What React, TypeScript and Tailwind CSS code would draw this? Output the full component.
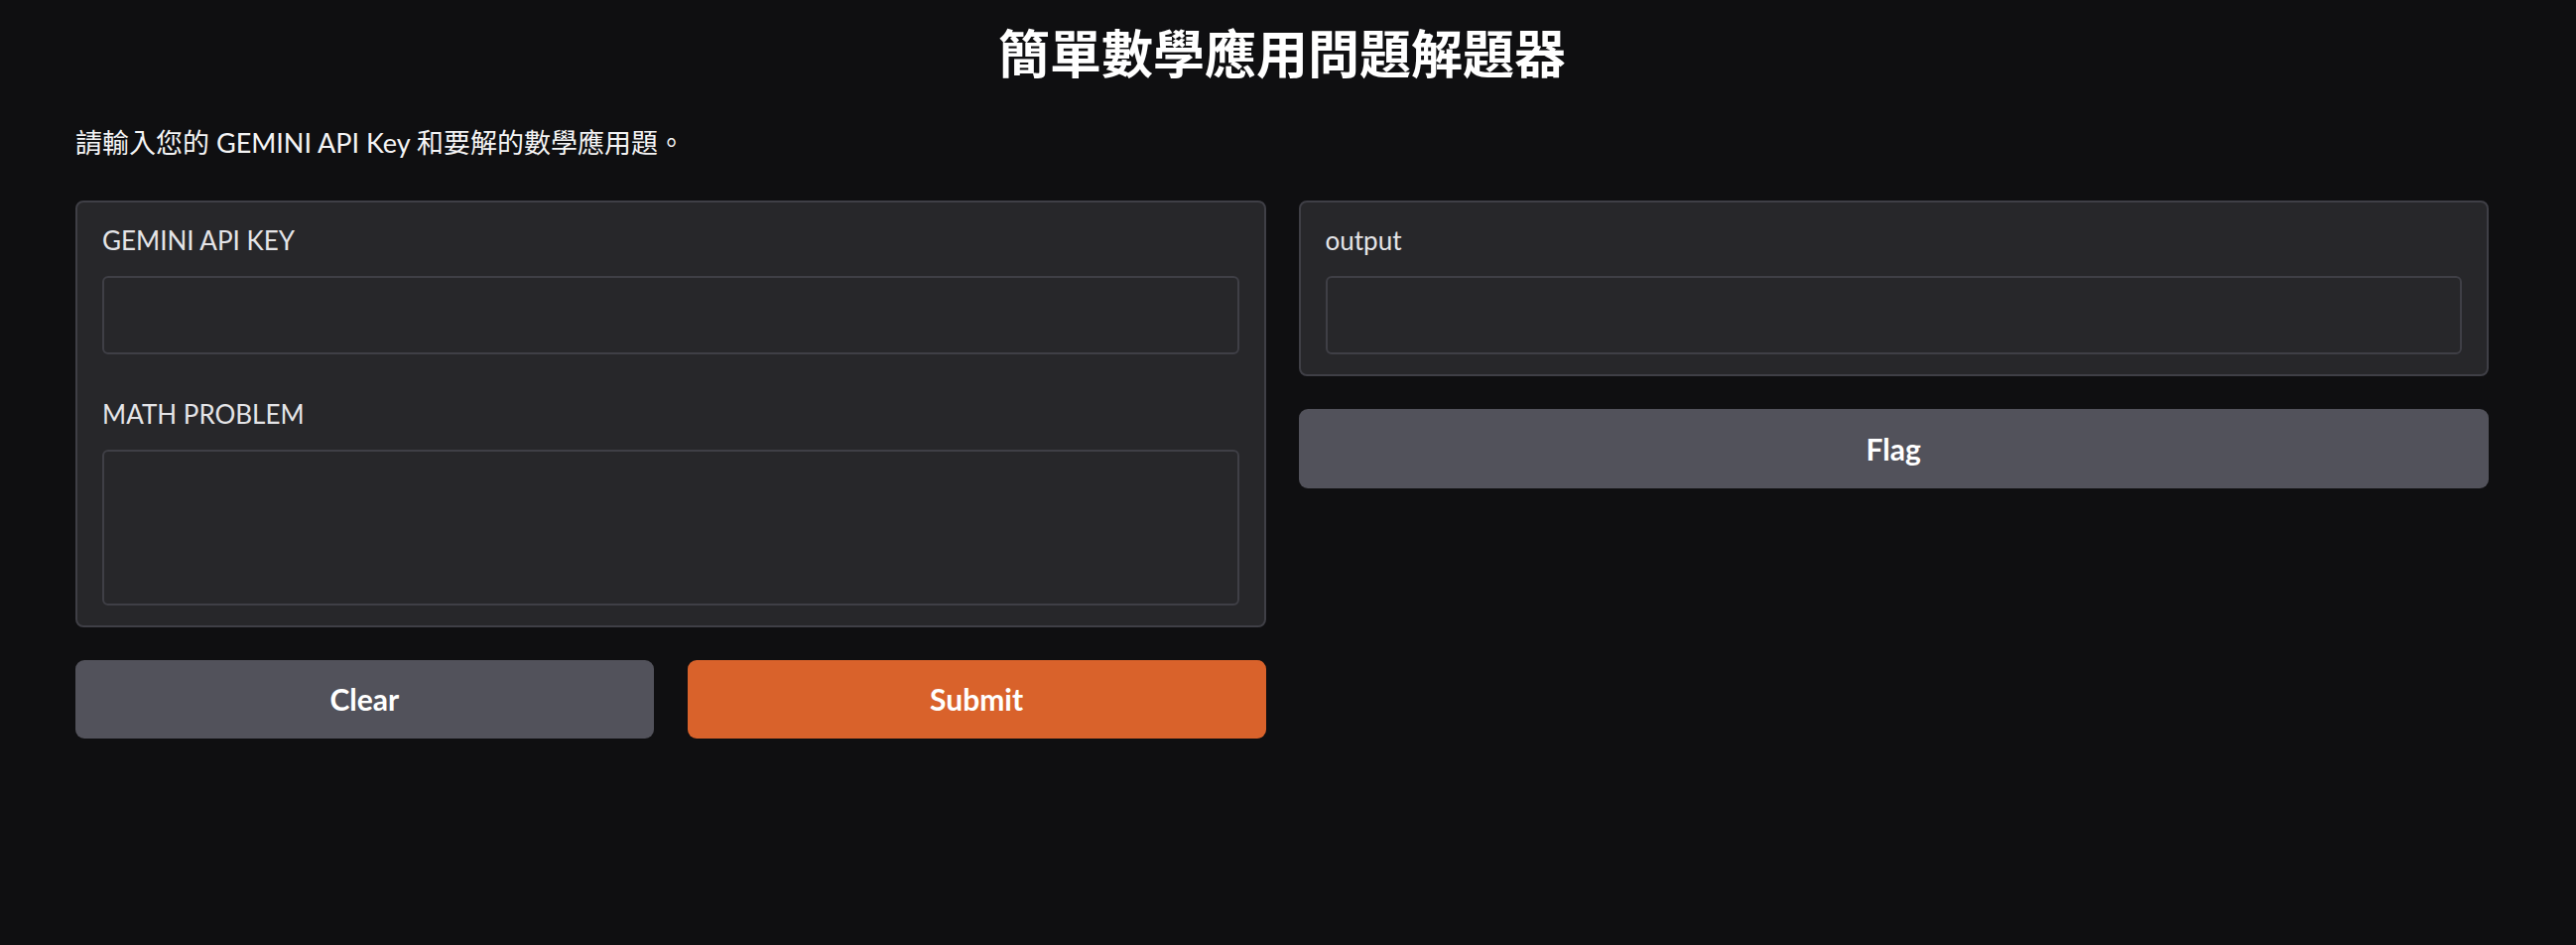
import React from 'react';

const FONT = 'font-["Lato","Noto_Sans_CJK_TC",sans-serif]';

interface FieldProps {
  label: string;
  tall?: boolean;
}

const Field: React.FC<FieldProps> = ({ label, tall }) => (
  <label className="flex flex-col">
    <span className="text-[26px] leading-[36px] text-[#e4e4e7] mb-[18px]">{label}</span>
    {tall ? (
      <textarea
        rows={4}
        className="h-[157px] w-full resize-none rounded-[6px] border-2 border-[#3f3f46] bg-[#27272a] outline-none"
      />
    ) : (
      <input
        type="text"
        className="h-[79px] w-full rounded-[6px] border-2 border-[#3f3f46] bg-[#27272a] outline-none"
      />
    )}
  </label>
);

const Panel: React.FC<{ children: React.ReactNode }> = ({ children }) => (
  <div className="flex flex-col gap-[42px] rounded-[8px] border-2 border-[#3f3f46] bg-[#27272a] px-[25px] pt-[20px] pb-[20px]">
    {children}
  </div>
);

export default function App() {
  return (
    <div className={`min-h-screen w-full bg-[#0f0f11] ${FONT} text-white`}>
      <div className="pl-[76px] pr-[88px] pt-[23px]">
        <h1 className="text-center text-[52px] leading-[62px] font-bold text-white">
          簡單數學應用問題解題器
        </h1>
        <p className="mt-[39px] text-[27px] leading-[40px] text-[#f4f4f5]">
          請輸入您的 GEMINI API Key 和要解的數學應用題。
        </p>

        <div className="mt-[38px] grid grid-cols-2 gap-[33px]">
          {/* 左側：輸入 */}
          <div className="flex flex-col gap-[33px]">
            <Panel>
              <Field label="GEMINI API KEY" />
              <Field label="MATH PROBLEM" tall />
            </Panel>
            <div className="grid grid-cols-2 gap-[34px]">
              <button className="h-[79px] rounded-[9px] bg-[#52525b] text-[30px] font-bold text-white">
                Clear
              </button>
              <button className="h-[79px] rounded-[9px] bg-[#d9622b] text-[30px] font-bold text-white">
                Submit
              </button>
            </div>
          </div>

          {/* 右側：輸出 */}
          <div className="flex flex-col gap-[33px]">
            <Panel>
              <Field label="output" />
            </Panel>
            <button className="h-[80px] rounded-[9px] bg-[#52525b] text-[30px] font-bold text-white">
              Flag
            </button>
          </div>
        </div>
      </div>
    </div>
  );
}
